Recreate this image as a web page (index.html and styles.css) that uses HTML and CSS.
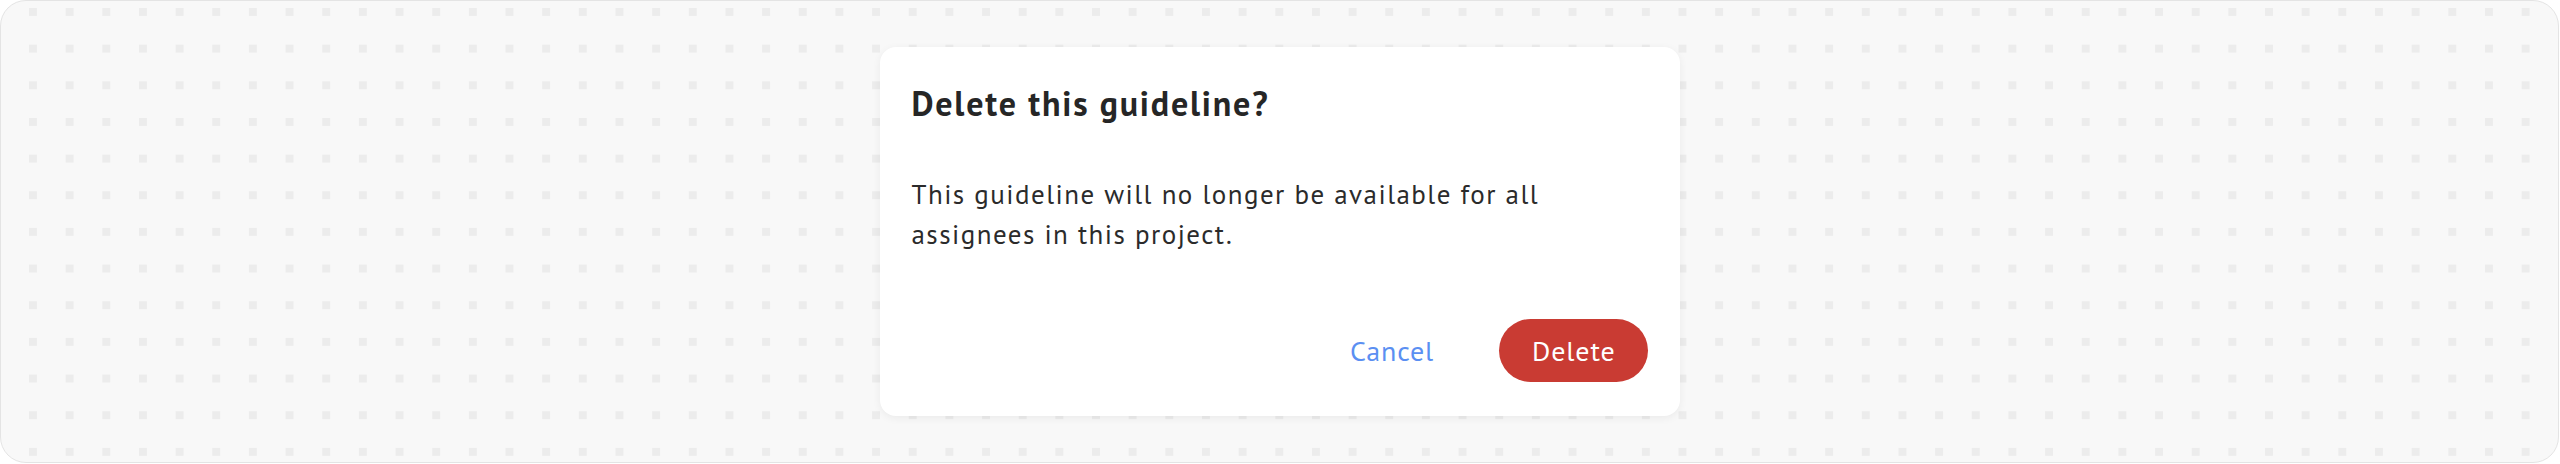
FILE: index.html
```html
<!DOCTYPE html>
<html lang="en">
<head>
<meta charset="utf-8">
<title>Delete this guideline?</title>
<link rel="stylesheet" href="styles.css">
</head>
<body>
<div class="frame">
  <div class="dialog" role="dialog" aria-labelledby="dlg-title">
    <h2 class="dialog-title" id="dlg-title">Delete this guideline?</h2>
    <p class="dialog-body">This guideline will no longer be available for all assignees in this project.</p>
    <div class="dialog-actions">
      <button class="btn btn-text" type="button">Cancel</button>
      <button class="btn btn-danger" type="button">Delete</button>
    </div>
  </div>
</div>
</body>
</html>
```

FILE: styles.css
```css
html, body {
  margin: 0;
  padding: 0;
  background: #ffffff;
}

body {
  font-family: "PT Sans", Lato, "Noto Sans", sans-serif;
}

.frame {
  box-sizing: border-box;
  width: 2559px;
  height: 463px;
  border: 1px solid #e4e4e4;
  border-radius: 26px;
  background-color: #f8f8f8;
  background-image: conic-gradient(from 270deg at 7.5px 7.5px, #ececec 25%, transparent 0);
  background-size: 36.667px 36.667px;
  background-position: 28px 7px;
  display: flex;
  align-items: center;
  justify-content: center;
}

.dialog {
  box-sizing: border-box;
  width: 800px;
  padding: 32px 32px 34px;
  background: #ffffff;
  border-radius: 16px;
  box-shadow: 0 2px 8px rgba(0, 0, 0, 0.06);
}

.dialog-title {
  margin: 0;
  font-size: 34px;
  line-height: 48px;
  font-weight: 700;
  letter-spacing: 0.053em;
  color: #262626;
}

.dialog-body {
  margin: 47px 0 0;
  width: 680px;
  font-size: 27px;
  line-height: 40px;
  letter-spacing: 0.054em;
  color: #2b2b2b;
}

.dialog-actions {
  margin-top: 65px;
  display: flex;
  justify-content: flex-end;
  align-items: center;
  gap: 40px;
}

.btn {
  font-family: inherit;
  font-size: 28px;
  letter-spacing: 0.03em;
  border: 0;
  height: 63px;
  line-height: 63px;
  padding: 0 32px 0 33px;
  border-radius: 32px;
  cursor: pointer;
}

.btn-text {
  background: transparent;
  color: #5b8ff2;
  padding: 0 25px;
}

.btn-danger {
  background: #c93b33;
  color: #ffffff;
}
```
